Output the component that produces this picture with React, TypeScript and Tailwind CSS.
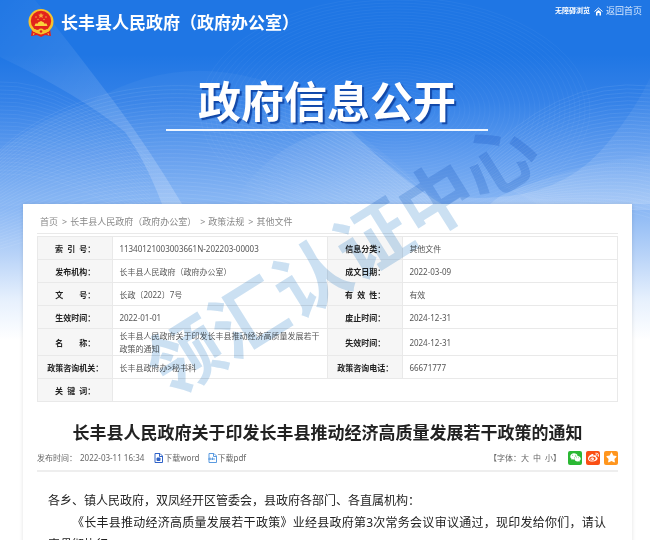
import { FaStar, FaWeibo, FaWeixin } from "react-icons/fa"

const crumbs = ["首页", "长丰县人民政府（政府办公室）", "政策法规", "其他文件"]

const rows = [
  ["索\u00a0\u00a0引\u00a0\u00a0号：", "11340121003003661N-202203-00003", "信息分类：", "其他文件"],
  ["发布机构：", "长丰县人民政府（政府办公室）", "成文日期：", "2022-03-09"],
  ["文\u3000\u3000号：", "长政〔2022〕7号", "有\u00a0\u00a0效\u00a0\u00a0性：", "有效"],
  ["生效时间：", "2022-01-01", "废止时间：", "2024-12-31"],
  ["名\u3000\u3000称：", "长丰县人民政府关于印发长丰县推动经济高质量发展若干政策的通知", "失效时间：", "2024-12-31"],
  ["政策咨询机关：", "长丰县政府办>秘书科", "政策咨询电话：", "66671777"],
]

const range = (n: number) => Array.from({ length: n }, (_, i) => i)

function Emblem() {
  return (
    <svg viewBox="0 0 26 28" className="h-7 w-[26px]" aria-hidden="true">
      <path d="M4 20 L3 27 L9 26 L13 28 L17 26 L23 27 L22 20Z" fill="#e3231b" />
      <circle cx="13" cy="12.5" r="12.5" fill="#f8c22c" />
      <circle cx="13" cy="12" r="10.2" fill="#e2231c" />
      <path d="M13 3.8 l.8 1.8 2 .1 -1.5 1.3 .5 2 -1.8-1.1 -1.8 1.1 .5-2 -1.5-1.3 2-.1Z" fill="#f7a83c" />
      <g fill="#f7a83c">
        <circle cx="8" cy="8" r=".8" />
        <circle cx="10" cy="10.5" r=".7" />
        <circle cx="18" cy="8" r=".8" />
        <circle cx="16" cy="10.5" r=".7" />
      </g>
      <path d="M10 13.5 L13 12 L16 13.5 V14.6 H18.5 L19.5 17 H6.5 L7.5 14.6 H10Z" fill="#fbd23c" />
      <path d="M4 19.5 Q13 23 22 19.5 L21 22.5 Q13 25.5 5 22.5Z" fill="#f8c22c" />
      <circle cx="13" cy="22.5" r="3" fill="#f8c22c" />
      <circle cx="13" cy="22.5" r="1.3" fill="#e2231c" />
      <path d="M6 24 L5.5 26 M20 24 L20.5 26" stroke="#f8c22c" strokeWidth="1" />
    </svg>
  )
}

function Backdrop() {
  return (
    <svg
      viewBox="0 0 650 340"
      preserveAspectRatio="none"
      className="absolute inset-x-0 top-0 h-[340px] w-full"
      aria-hidden="true"
    >
      <defs>
        <linearGradient id="sky" x1="0" y1="0" x2="0" y2="1">
          <stop offset="0" stopColor="#1f76e4" />
          <stop offset="0.16" stopColor="#1f76e4" />
          <stop offset="0.3" stopColor="#3582e8" />
          <stop offset="0.44" stopColor="#5c9aee" />
          <stop offset="0.6" stopColor="#86b5f4" />
          <stop offset="0.75" stopColor="#b8d3f8" />
          <stop offset="0.88" stopColor="#e6f0fd" />
          <stop offset="1" stopColor="#ffffff" />
        </linearGradient>
        <linearGradient id="beam" x1="0" y1="0" x2="1" y2="1">
          <stop offset="0" stopColor="#fff" stopOpacity="0.01" />
          <stop offset="1" stopColor="#fff" stopOpacity="0.22" />
        </linearGradient>
        <linearGradient id="slope" x1="0" y1="0" x2="1" y2="0">
          <stop offset="0" stopColor="#fff" stopOpacity="0" />
          <stop offset="1" stopColor="#fff" stopOpacity="0.24" />
        </linearGradient>
        <linearGradient id="bowl" x1="0" y1="0" x2="0" y2="1">
          <stop offset="0" stopColor="#fff" stopOpacity="0.03" />
          <stop offset="1" stopColor="#fff" stopOpacity="0.16" />
        </linearGradient>
      </defs>
      <rect width="650" height="340" fill="url(#sky)" />
      <path d="M35 0 Q75 50 115 103 Q150 150 182 204 L162 204 Q145 160 125 132 Q80 95 0 57 V0Z" fill="url(#beam)" />
      <path d="M90 102 Q200 38 320 105 Q390 155 445 206 L0 206 V150 Q40 120 90 102Z" fill="#fff" opacity="0.04" />
      <path d="M230 206 Q280 130 350 130 Q400 180 445 206Z" fill="url(#slope)" />
      <path d="M460 197 Q560 205 610 140 Q635 110 650 78 V210 H440Z" fill="url(#bowl)" />
      <path d="M500 196 Q570 165 650 155 V204 H490Z" fill="url(#bowl)" />
      <g fill="none" stroke="#fff" strokeWidth="1" opacity="0.07">
        {range(34).map((i) => (
          <path key={i} d={`M0 ${150 + i * 3} C${60 + i} ${90 + i * 4} ${250 - i * 2} ${20 + i * 5} ${440 - i} ${206 + i * 2}`} />
        ))}
      </g>
      <g fill="none" stroke="#fff" strokeWidth="1" opacity="0.035">
        {range(36).map((i) => (
          <ellipse key={i} cx="395" cy="110" rx={20 + i * 5} ry={8 + i * 3} />
        ))}
      </g>
      <g fill="none" stroke="#fff" strokeWidth="1" opacity="0.07">
        {range(34).map((i) => (
          <path key={i} d={`M${470 + i * 2} ${170 + i} Q${555 + i * 2} ${75 + i * 4} 650 ${86 + i * 4}`} />
        ))}
      </g>
      <g fill="none" stroke="#fff" strokeWidth="1" opacity="0.05">
        {range(24).map((i) => (
          <path key={i} d={`M0 ${82 + i * 4} Q70 ${80 + i * 4} 150 ${160 + i * 3}`} />
        ))}
      </g>
    </svg>
  )
}

function FileIcon({ color, pdf }: { color: string; pdf?: boolean }) {
  return (
    <svg viewBox="0 0 18 20" className="h-[10px] w-[9px]" fill="none" stroke={color} strokeWidth="2" aria-hidden="true">
      <path d="M2 1 H12 L17 6 V19 H2Z" />
      <path d="M11 1 V7 H17" />
      {pdf ? <path d="M0 12 H14 M4 9 V14 M9 9 V14" /> : <path d="M6 10 H12 V15 H6Z" fill={color} />}
    </svg>
  )
}

function Header() {
  return (
    <header className="relative h-[204px] text-white">
      <div className="flex items-start justify-between pr-2 pl-7">
        <div className="flex items-center gap-[7px] pt-[9px]">
          <Emblem />
          <span className="text-[17px] leading-7 font-bold whitespace-nowrap">长丰县人民政府（政府办公室）</span>
        </div>
        <nav className="flex items-center gap-1 pt-1 leading-[14px] whitespace-nowrap">
          <a href="#accessible" className="text-[7px] font-bold">
            无障碍浏览
          </a>
          <a href="#home" className="flex items-center gap-[3px] text-[9px] text-blue-100">
            <svg viewBox="0 0 18 18" className="size-[9px]" fill="none" stroke="#fff" strokeWidth="2" aria-hidden="true">
              <path d="M1 9 L9 2 L17 9" />
              <path d="M4 10 L9 6 L14 10 V17 H11 V12 H7 V17 H4Z" fill="#fff" stroke="none" />
            </svg>
            返回首页
          </a>
        </nav>
      </div>
      <div className="pl-1">
        <div className="mx-auto mt-[38px] w-[322px] border-b-2 border-blue-50 text-center">
          <h1 className="text-[43px] leading-[54px] font-bold whitespace-nowrap [text-shadow:2px_2px_1px_#1248a8]">
            政府信息公开
          </h1>
        </div>
      </div>
    </header>
  )
}

function InfoTable() {
  const th = "border border-[#e9e9e9] bg-[#f6f6f6] p-0 text-center font-bold text-[#222]"
  const td = "border border-[#e9e9e9] px-1.5 py-0 text-[#555]"
  return (
    <table className="mt-[2px] w-full table-fixed border-collapse text-[8px] leading-[13px]">
      <colgroup>
        <col className="w-[13%]" />
        <col className="w-[37%]" />
        <col className="w-[13%]" />
        <col className="w-[37%]" />
      </colgroup>
      <tbody>
        {rows.map(([a, b, c, d]) => (
          <tr key={a} className="h-[23px]">
            <th scope="row" className={th}>{a}</th>
            <td className={td}>{b}</td>
            <th scope="row" className={th}>{c}</th>
            <td className={td}>{d}</td>
          </tr>
        ))}
        <tr className="h-[23px]">
          <th scope="row" className={th}>关{"\u00a0\u00a0"}键{"\u00a0\u00a0"}词：</th>
          <td className={td} colSpan={3} />
        </tr>
      </tbody>
    </table>
  )
}

function MetaBar() {
  const share = "flex size-[14px] items-center justify-center rounded-xs text-[11px] text-white"
  return (
    <div className="flex h-[27px] items-center justify-between border-b-2 border-[#eee] text-[8px] whitespace-nowrap text-[#666]">
      <div className="flex items-center">
        <span>发布时间：</span>
        <time className="ml-[3px]">2022-03-11 16:34</time>
        <a href="#word" className="ml-2.5 flex items-center gap-px">
          <FileIcon color="#2f62c8" />
          下载word
        </a>
        <a href="#pdf" className="ml-2 flex items-center gap-px">
          <FileIcon color="#5b9be0" pdf />
          下载pdf
        </a>
      </div>
      <div className="flex items-center gap-1">
        <div className="mr-[3px] flex items-center">
          <span>【字体：</span>
          <span className="flex gap-1">
            <button>大</button>
            <button>中</button>
            <button>小</button>
          </span>
          <span>】</span>
        </div>
        <button aria-label="微信" className={`${share} bg-[#2bb834]`}>
          <FaWeixin />
        </button>
        <button aria-label="微博" className={`${share} bg-[#fa4f14]`}>
          <FaWeibo />
        </button>
        <button aria-label="收藏" className={`${share} bg-[#ff961e]`}>
          <FaStar />
        </button>
      </div>
    </div>
  )
}

export default function App() {
  return (
    <div
      lang="zh-CN"
      className="relative h-screen overflow-hidden bg-white font-['Noto_Sans','Noto_Sans_CJK_SC',sans-serif]"
    >
      <Backdrop />
      <Header />
      <main className="relative mr-[18px] ml-[23px] min-h-full bg-white px-[14px] shadow-[0_0_4px_rgba(0,0,0,0.12)]">
        <nav className="flex h-[30px] items-center gap-1 border-b border-[#e9e9e9] px-[3px] pt-1.5 text-[9px] whitespace-nowrap text-[#888]">
          {crumbs.map((c, i) => (
            <span key={c} className="flex gap-[3px]">
              {i > 0 && <span>&gt;</span>}
              <a href="#list">{c}</a>
            </span>
          ))}
        </nav>
        <InfoTable />
        <h2 className="mt-[18px] text-center text-[17px] leading-[25px] font-bold text-[#222]">
          长丰县人民政府关于印发长丰县推动经济高质量发展若干政策的通知
        </h2>
        <MetaBar />
        <article className="mt-[18px] pr-3 pl-[11px] text-justify text-xs leading-[22px] text-[#222]">
          <p>各乡、镇人民政府，双凤经开区管委会，县政府各部门、各直属机构：</p>
          <p className="indent-[2em]">
            《长丰县推动经济高质量发展若干政策》业经县政府第3次常务会议审议通过，现印发给你们，请认真贯彻执行。
          </p>
        </article>
      </main>
      <div className="pointer-events-none absolute top-[258px] left-[342px] -translate-x-1/2 -translate-y-1/2 -rotate-32 text-[74px] leading-none font-bold whitespace-nowrap text-[#cbe0f2] mix-blend-multiply">
        领汇认证中心
      </div>
    </div>
  )
}
